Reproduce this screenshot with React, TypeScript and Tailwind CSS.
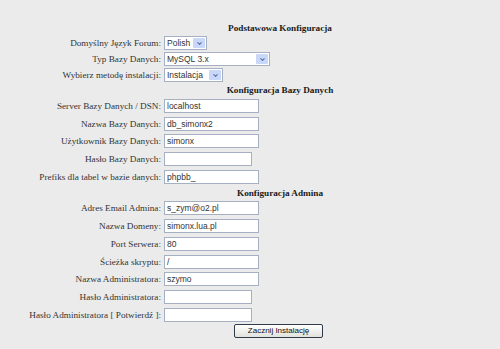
import { ChevronDown } from 'lucide-react';

type Field = {
    label: string;
    value?: string;
    password?: boolean;
};

const dbFields: Field[] = [
    { label: 'Server Bazy Danych / DSN:', value: 'localhost' },
    { label: 'Nazwa Bazy Danych:', value: 'db_simonx2' },
    { label: 'Użytkownik Bazy Danych:', value: 'simonx' },
    { label: 'Hasło Bazy Danych:', password: true },
    { label: 'Prefiks dla tabel w bazie danych:', value: 'phpbb_' },
];

const adminFields: Field[] = [
    { label: 'Adres Email Admina:', value: 's_zym@o2.pl' },
    { label: 'Nazwa Domeny:', value: 'simonx.lua.pl' },
    { label: 'Port Serwera:', value: '80' },
    { label: 'Ścieżka skryptu:', value: '/' },
    { label: 'Nazwa Administratora:', value: 'szymo' },
    { label: 'Hasło Administratora:', password: true },
    { label: 'Hasło Administratora [ Potwierdź ]:', password: true },
];

const serif = 'font-["Liberation_Serif","Times_New_Roman",serif]';
const sans = 'font-["Liberation_Sans",Arial,sans-serif]';

function Heading({ children }: { children: React.ReactNode }) {
    return (
        <div
            className={`ml-[162px] h-[12px] w-[236px] text-center text-[9.2px] leading-[12px] font-bold text-[#1a1a1a] ${serif}`}
        >
            {children}
        </div>
    );
}

function Label({ children }: { children: React.ReactNode }) {
    return (
        <div
            className={`w-[162px] shrink-0 pr-[1px] text-right text-[9.2px] leading-[14px] whitespace-nowrap text-[#333] ${serif}`}
        >
            {children}
        </div>
    );
}

function Select({ value, width }: { value: string; width: string }) {
    return (
        <div
            className={`ml-[2px] flex h-[14px] items-center border border-[#a5b1c2] bg-white ${width}`}
        >
            <span
                className={`flex-1 pl-[2px] text-[8.5px] leading-[12px] text-[#333] ${sans}`}
            >
                {value}
            </span>
            <span className="m-[1px] flex h-[10px] w-[12px] items-center justify-center rounded-[1px] bg-[#c9d8f8]">
                <ChevronDown className="h-[7px] w-[7px] text-[#5b76ad]" strokeWidth={4} />
            </span>
        </div>
    );
}

function TextRow({ field }: { field: Field }) {
    return (
        <div className="mb-[3.7px] flex h-[14px] items-center">
            <Label>{field.label}</Label>
            <div
                className={`ml-[2px] flex h-[14px] items-center border border-[#a5b1c2] bg-white pl-[2px] ${
                    field.password ? 'w-[88px]' : 'w-[95px]'
                }`}
            >
                <span className={`text-[8.5px] leading-[12px] text-[#333] ${sans}`}>
                    {field.value}
                </span>
            </div>
        </div>
    );
}

export default function App() {
    return (
        <div className="h-[349px] w-[500px] overflow-hidden bg-[#ebebeb] pt-[22px]">
            <Heading>Podstawowa Konfiguracja</Heading>

            <div className="mt-[2px]">
                <div className="mb-[2px] flex h-[14px] items-center">
                    <Label>Domyślny Język Forum:</Label>
                    <Select value="Polish" width="w-[43px]" />
                </div>
                <div className="mb-[2px] flex h-[14px] items-center">
                    <Label>Typ Bazy Danych:</Label>
                    <Select value="MySQL 3.x" width="w-[106px]" />
                </div>
                <div className="mb-[2px] flex h-[14px] items-center">
                    <Label>Wybierz metodę instalacji:</Label>
                    <Select value="Instalacja" width="w-[59px]" />
                </div>
            </div>

            <Heading>Konfiguracja Bazy Danych</Heading>

            <div className="mt-[3px]">
                {dbFields.map((f) => (
                    <TextRow key={f.label} field={f} />
                ))}
            </div>

            <Heading>Konfiguracja Admina</Heading>

            <div className="mt-[2px]">
                {adminFields.map((f) => (
                    <TextRow key={f.label} field={f} />
                ))}
            </div>

            <div className="ml-[234px] -mt-[1px]">
                <button
                    className={`flex h-[14px] w-[89px] items-center justify-center rounded-[2px] border border-[#2f3a4a] bg-gradient-to-b from-white to-[#e2e2dc] text-[8px] leading-[12px] text-[#111] ${sans}`}
                >
                    Zacznij Instalację
                </button>
            </div>
        </div>
    );
}
